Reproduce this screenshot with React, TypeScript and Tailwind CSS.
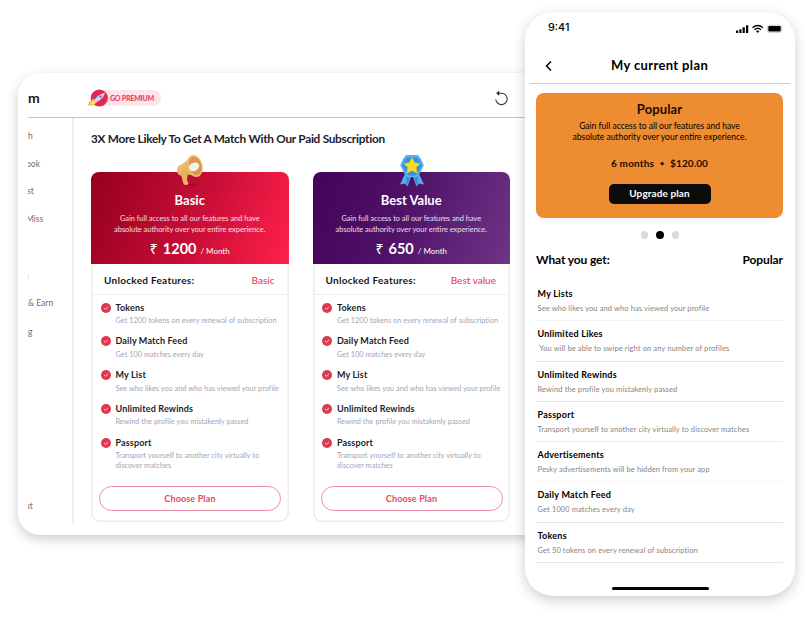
import type { ReactNode } from "react";

const features = [
  { title: "Tokens", text: "Get 1200 tokens on every renewal of subscription" },
  { title: "Daily Match Feed", text: "Get 100 matches every day" },
  { title: "My List", text: "See who likes you and who has viewed your profile" },
  { title: "Unlimited Rewinds", text: "Rewind the profile you mistakenly passed" },
  { title: "Passport", text: "Transport yourself to another city virtually to discover matches" },
];

const benefits = [
  { title: "My Lists", text: "See who likes you and who has viewed your profile", line: "border-[#f3f3f3]" },
  { title: "Unlimited Likes", text: "\u00a0You will be able to swipe right on any number of profiles", line: "border-[#e2e2e2]" },
  { title: "Unlimited Rewinds", text: "Rewind the profile you mistakenly passed", line: "border-[#e2e2e2]" },
  { title: "Passport", text: "Transport yourself to another city virtually to discover matches", line: "border-[#ebebeb]" },
  { title: "Advertisements", text: "Pesky advertisements will be hidden from your app", line: "border-[#f5f5f5]" },
  { title: "Daily Match Feed", text: "Get 1000 matches every day", line: "border-[#e2e2e2]" },
  { title: "Tokens", text: "Get 50 tokens on every renewal of subscription", line: "border-[#e6e6e6]" },
];

function Rocket() {
  return (
    <svg className="relative z-10 h-[20px] w-[22px] shrink-0" viewBox="0 0 22 20">
      <circle cx="11.300" cy="10" r="8.600" fill="#e8254f" />
      <path d="M6 10.500 1 14 .2 17.800l6-.8 3.500-3.500z" fill="#fbb034" />
      <path d="M5.500 12.500 2.500 15l-.5 1.800 3.500-.8 2.500-2.300z" fill="#ffe27a" />
      <path d="m5.500 10.500 4-3 3 1-4 4zM9.500 14l1.500-4 2.500-1-.5 3z" fill="#4b62b8" />
      <path d="M6.300 12.500Q9.800 6.300 17 4.800 15.500 11 8.800 14z" fill="#d9d6e8" />
      <circle cx="12.700" cy="8.600" r="1.200" fill="#5a6fc0" />
    </svg>
  );
}

function Megaphone() {
  return (
    <svg className="h-[34px] w-[30px]" viewBox="0 0 30 34">
      <defs>
        <linearGradient id="horn" x1="0" y1="0" x2="1" y2="1">
          <stop offset="0" stopColor="#f8d08a" />
          <stop offset="1" stopColor="#dd9a45" />
        </linearGradient>
      </defs>
      <ellipse cx="16" cy="30.500" rx="7" ry="1.500" fill="#5c0014" opacity=".25" />
      <path d="M6 20l6.500 1-.5 5 1.500 3.500q-.5 1.500-3 1.500-2 0-2.500-2.500z" fill="#eeb163" />
      <path d="M4 11.500Q10 9 17 1.500l4.500 20.500q-7-2-15-.2Q2 21 2 16.500q0-4 2-5z" fill="url(#horn)" />
      <ellipse cx="19.800" cy="12" rx="7.600" ry="11.200" transform="rotate(-14 19.800 12)" fill="#f0bb6c" />
      <ellipse cx="20.300" cy="12" rx="6.200" ry="9.500" transform="rotate(-14 20.300 12)" fill="#d69a48" />
      <path d="M14 13.500q0-3.500 3.500-4.500 5.500-1.500 6.500 1.500.8 4-4 6.500-5.500 1-6-3.500z" fill="#f5f0ec" />
    </svg>
  );
}

function Ribbon() {
  return (
    <svg className="h-[34px] w-[30px]" viewBox="0 0 30 34">
      <path d="m8 20 6 3-3.500 9.500-2.500-3-5 1zM22 20l-6 3 3.500 9.500 2.500-3 5 1z" fill="#58aef0" />
      <path d="m9 22 4 2-2.500 8-1.500-3zM21 22l-4 2 2.500 8 1.500-3z" fill="#3d91dc" />
      <path d="M9 1h12l3 4 2.800 6-2.800 6.500-4 5.500H10l-4-5.500L3.200 11 6 5z" fill="#56b3f3" />
      <path d="M10 3.500h10l2.500 3 2 5-2.500 5-3.500 5h-7L8 16.500l-2.500-5 2-5z" fill="#3292e2" />
      <path d="m15 3.800 2.600 4.900 5.400.9-3.900 3.900.9 5.500-5-2.500-5 2.500.9-5.500L7 9.600l5.400-.9z" fill="#fbdc2b" stroke="#e0c528" strokeWidth=".8" strokeLinejoin="round" />
    </svg>
  );
}

function CheckBadge() {
  return (
    <svg className="h-[10px] w-[10px] shrink-0" viewBox="0 0 10 10">
      <circle cx="5" cy="5" r="5" fill="#dc3a50" />
      <path d="m3 5 1.500 1.300L7 3.900" fill="none" stroke="#ffd9df" strokeWidth=".9" />
    </svg>
  );
}

type PlanProps = {
  name: string;
  price: string;
  tag: string;
  icon: ReactNode;
  header: string;
};

function PlanCard({ name, price, tag, icon, header }: PlanProps) {
  return (
    <section className="relative flex h-[350px] w-[197.500px] flex-col rounded-[9px] shadow-[inset_0_0_0_1.500px_#ececee]">
      <div className="absolute -top-[18px] left-[84px]">{icon}</div>
      <header className={`flex h-[92px] flex-col items-center rounded-t-[8px] pt-[19px] text-white ${header}`}>
        <h2 className="h-[19px] text-[13px] font-bold leading-[18px]">{name}</h2>
        <p className="pt-[3px] text-center text-[7.400px] leading-[11px] text-white/85">
          Gain full access to all our features and have
          <br />
          absolute authority over your entire experience.
        </p>
        <p className="mt-[5px] flex items-baseline whitespace-nowrap leading-[17px]">
          <span className="mr-[5px] font-['Noto_Sans'] text-[14px] leading-[17px]">₹</span>
          <span className="mr-[4px] text-[14.500px] font-bold">{price}</span>
          <span className="text-[8px]">/ Month</span>
        </p>
      </header>
      <div className="flex h-[31px] items-center justify-between border-b border-[#eeeeee] pl-[13px] pr-[14px] pt-[3px] text-[10px]">
        <h3 className="font-bold tracking-[0.28px] text-[#17171f]">Unlocked Features:</h3>
        <span className="font-medium text-[#ea4060]">{tag}</span>
      </div>
      <ul className="flex grow flex-col pl-[9.500px] pt-[5.500px]">
        {features.map((f) => (
          <li key={f.title} className="flex h-[33.800px] gap-[5px]">
            <div className="pt-[2px]"><CheckBadge /></div>
            <div className="w-[168px]">
              <h4 className="text-[9px] font-bold leading-[14px] tracking-[0.14px] text-[#1c1c28]">{f.title}</h4>
              <p className="pt-[1.500px] text-[7.300px] leading-[9.500px] tracking-[0.030px] text-[#a2a5b5]">{f.text}</p>
            </div>
          </li>
        ))}
      </ul>
      <button className="mb-[11px] ml-[8px] h-[25px] w-[182px] rounded-full border border-[#e993a4] text-[9px] font-bold tracking-[0.15px] text-[#e34863]">
        Choose Plan
      </button>
    </section>
  );
}

function DesktopWindow() {
  return (
    <main className="mt-[73px] flex h-[462px] w-[530px] shrink-0 flex-col rounded-[22px] bg-white pl-[10px] shadow-[0_4px_12px_rgba(0,0,0,0.2)]">
      <header className="flex h-[45px] items-center border-b border-[#c3c3d0] pt-[5px]">
        <span className="w-[60px] text-[14px] font-bold text-[#1a1a22]">m</span>
        <div className="flex items-center">
          <Rocket />
          <span className="-ml-[14px] h-[16px] whitespace-nowrap rounded-full bg-[#ffe4e9] pl-[14px] pr-[7px] text-[7px] font-black leading-[17px] tracking-[-0.200px] text-[#e2456a]">GO PREMIUM</span>
        </div>
        <svg className="absolute left-[493px] h-4 w-4" viewBox="0 0 16 16" fill="none" stroke="#333" strokeWidth="1.100">
          <path d="M2.800 9.500A5.700 5.700 0 1 0 8.500 3.200H5" />
          <path d="M3.500 3.200 6 1v4.400z" fill="#222" strokeWidth=".4" />
        </svg>
      </header>
      <div className="flex grow">
        <nav className="flex h-[406px] w-[45.500px] flex-col overflow-hidden border-r-2 border-[#eeeeef] pt-[10px] text-[8.500px] leading-[16px] text-[#6b6e7d]">
          <span>h</span>
          <span className="-ml-[2px] mt-[12px]">ook</span>
          <span className="-ml-px mt-[11px]">st</span>
          <span className="-ml-[2px] mt-[12px]">Miss</span>
          <span className="-ml-[3px] mt-[41px] h-4">s</span>
          <span className="mt-[11px] whitespace-nowrap">&amp; Earn</span>
          <span className="mt-[13px]">g</span>
          <span className="-ml-[3px] mt-auto mb-[10px]">ut</span>
        </nav>
        <div className="pl-[17.500px] pt-[12px]">
          <h1 className="h-[42px] whitespace-nowrap text-[11.800px] font-bold leading-[18px] tracking-[-0.270px] text-[#21212b]">3X More Likely To Get A Match With Our Paid Subscription</h1>
          <div className="flex gap-[24px]">
            <PlanCard name="Basic" price="1200" tag="Basic" icon={<Megaphone />} header="bg-linear-[110deg,#95001f,#c90e37_55%,#ff214b]" />
            <PlanCard name="Best Value" price="650" tag="Best value" icon={<Ribbon />} header="bg-linear-[110deg,#430359,#4f1268_45%,#6f3486]" />
          </div>
        </div>
      </div>
    </main>
  );
}

function StatusIcons() {
  return (
    <svg className="h-[10px] w-[48px]" viewBox="0 0 48 10">
      <path d="M0 6.600h2.200V9H0zM3.300 5.300h2.200V9H3.300zM6.600 3.300h2.200V9H6.600zM10 1.200h2.200V9H10z" />
      <path d="M16.500 3.700q5.200-4.500 10.400 0M18.400 5.700q3.300-2.600 6.600 0" fill="none" stroke="#000" strokeWidth="1.300" />
      <path d="m19.900 7.100 1.800 2 1.800-2q-1.800-1.300-3.600 0z" />
      <rect x="31.400" y="1.200" width="14.200" height="7.200" rx="2" fill="none" stroke="#aaa" strokeWidth=".6" />
      <rect x="32.300" y="2" width="12.400" height="5.600" rx="1" />
      <path d="M46.400 3.700q1.200 1.100 0 2.200z" fill="#999" />
    </svg>
  );
}

function Phone() {
  return (
    <aside className="relative -ml-[23px] mt-[12px] flex h-[584px] w-[270px] shrink-0 flex-col rounded-[28px] bg-white shadow-[0_4px_13px_rgba(0,0,0,0.2)]">
      <div className="flex h-[33px] items-center justify-between pl-[23px] pr-[11px]">
        <span className="font-['Inter'] text-[10.800px] font-medium">9:41</span>
        <StatusIcons />
      </div>
      <header className="mx-[5px] flex h-[39px] items-center border-b border-[#cccccc] pl-[14px] pt-[3px]">
        <svg className="h-[12px] w-[10px]" viewBox="0 0 10 12" fill="none" stroke="#000" strokeWidth="1.500">
          <path d="M7 1.500 2.500 6 7 10.500" />
        </svg>
        <h1 className="ml-[57px] text-[13px] font-bold tracking-[0.360px]">My current plan</h1>
      </header>
      <section className="ml-[11px] mr-[12px] mt-[9px] flex h-[125px] flex-col items-center rounded-[8px] bg-[#ed8c31] pt-[7px] text-[#1b0d02]">
        <h2 className="text-[13px] font-bold leading-[18px] tracking-[0.100px]">Popular</h2>
        <p className="pt-[3px] text-center text-[8.500px] leading-[10.800px] text-black">
          Gain full access to all our features and have
          <br />
          absolute authority over your entire experience.
        </p>
        <p className="flex pt-[12px] text-[10px] font-bold leading-[16px]">
          <span className="tracking-[0.180px]">6 months</span>
          <span className="mx-[5px] w-[6px] text-center text-[7px]">•</span>
          <span className="tracking-[0.100px]">$120.00</span>
        </p>
        <button className="mt-[13px] h-[20px] w-[102px] rounded-[5px] bg-[#0b0b0b] text-[10px] font-bold tracking-[0.100px] text-white">Upgrade plan</button>
      </section>
      <div className="mt-[13px] flex h-[8px] justify-center gap-[8px]">
        <i className="size-[7.500px] rounded-full bg-[#dadada]" />
        <i className="size-[7.500px] rounded-full bg-black" />
        <i className="size-[7.500px] rounded-full bg-[#dadada]" />
      </div>
      <div className="ml-[11px] mr-[12px] mt-[12px] flex h-[18px] items-center justify-between text-[12px] font-bold">
        <h3 className="tracking-[-0.120px]">What you get:</h3>
        <span className="tracking-[-0.100px]">Popular</span>
      </div>
      <ul className="ml-[11px] mr-[12px] mt-[12px]">
        {benefits.map((b) => (
          <li key={b.title} className={`h-[40.300px] border-b pl-[1.500px] pt-[6px] ${b.line}`}>
            <h4 className="text-[9px] font-bold leading-[14px] tracking-[0.240px] text-black">{b.title}</h4>
            <p className="whitespace-nowrap pt-[3px] text-[7.500px] leading-[10px] tracking-[0.110px] text-[#858585]">{b.text}</p>
          </li>
        ))}
      </ul>
      <div className="mx-auto mb-[6px] mt-auto h-[3px] w-[97px] rounded-full bg-black" />
    </aside>
  );
}

export default function App() {
  return (
    <div className="relative flex h-[620px] w-[812px] items-start overflow-hidden bg-white pl-[18px] font-['Lato','Liberation_Sans',sans-serif]">
      <DesktopWindow />
      <Phone />
    </div>
  );
}
